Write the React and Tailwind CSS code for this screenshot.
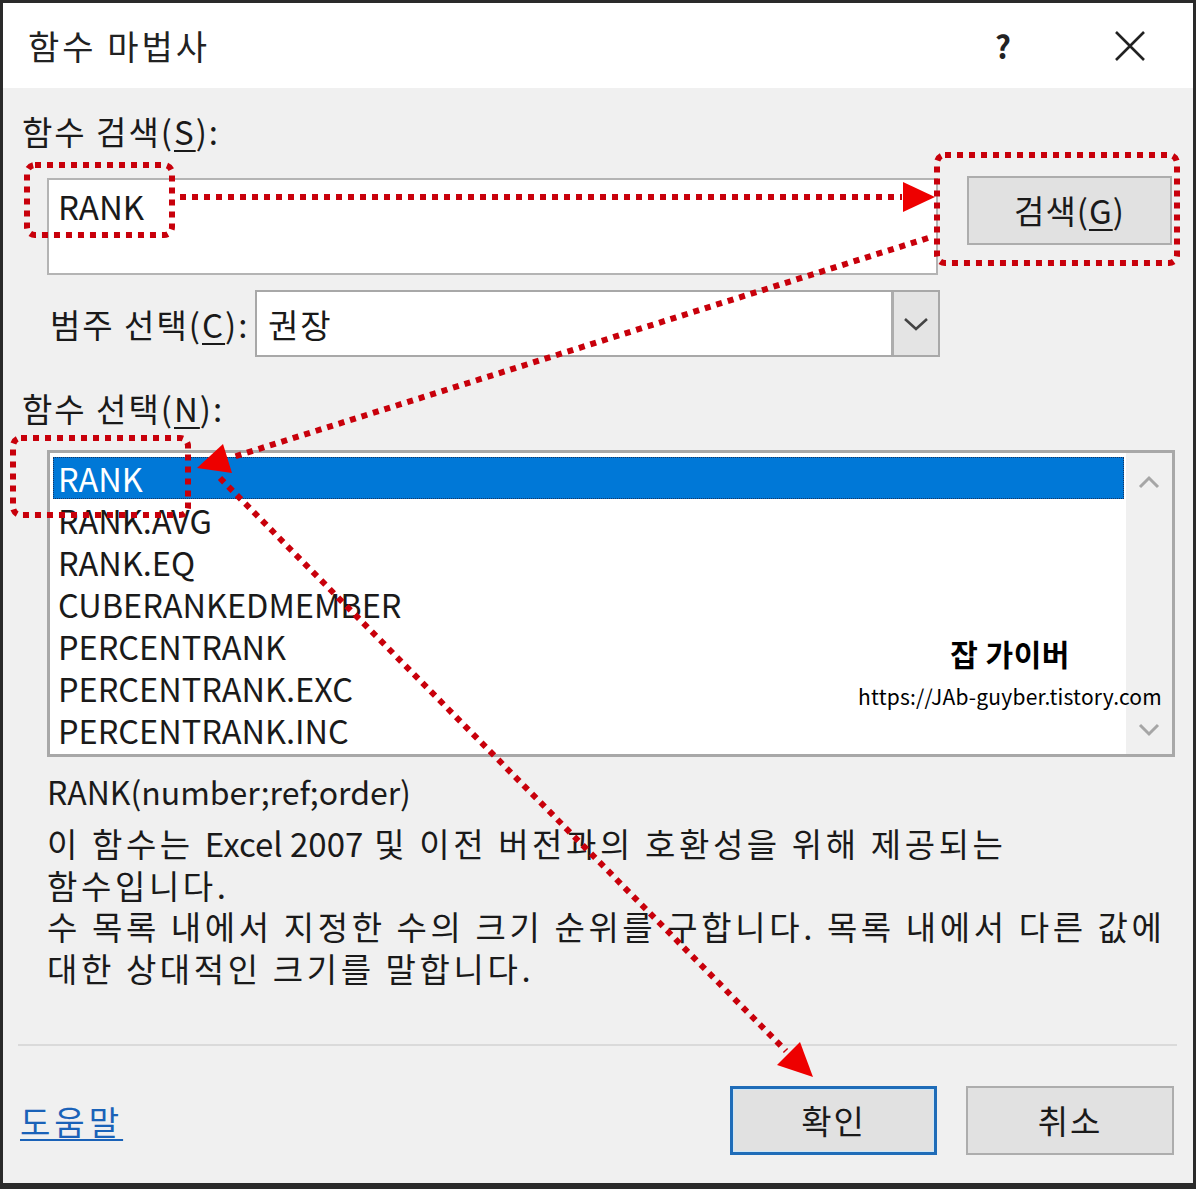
export default function App() {
  const items = [
    "RANK",
    "RANK.AVG",
    "RANK.EQ",
    "CUBERANKEDMEMBER",
    "PERCENTRANK",
    "PERCENTRANK.EXC",
    "PERCENTRANK.INC",
  ];
  return (
    <div className="relative w-[1200px] h-[1189px] bg-white overflow-hidden font-['Noto_Sans_CJK_KR','Noto_Sans',sans-serif] text-[#1a1a1a]">
      <div className="w-[1196px] h-[1189px] border-l-[3px] border-t-[3px] border-r-[3px] border-b-[6px] border-[#2a2a2a] flex flex-col">
        {/* Title bar */}
        <div className="h-[85px] shrink-0 bg-white flex items-center">
          <span className="pl-[25px] text-[34px] leading-none tracking-[3px] text-[#222]">함수 마법사</span>
          <span className="ml-auto text-[31px] font-bold leading-none text-[#222]">?</span>
          <svg width="32" height="30" viewBox="0 0 32 30" className="ml-[103px] mr-[47px]">
            <path d="M2 1 L30 29 M30 1 L2 29" stroke="#222" strokeWidth="2.6" fill="none" />
          </svg>
        </div>

        {/* Body */}
        <div className="flex-1 bg-[#f0f0f0] pl-[19px] flex flex-col">
          <div className="mt-[23px] h-[40px] leading-[40px] text-[33px] tracking-[2px]">
            함수 검색(<span className="underline underline-offset-[5px] decoration-[2px]">S</span>):
          </div>

          <div className="mt-[27px] flex items-start">
            <div className="ml-[25px] w-[891px] h-[97px] bg-white border-2 border-[#b4b4b4] pl-[9px] pt-[6px]">
              <div className="h-[40px] leading-[40px] text-[33px]">RANK</div>
            </div>
            <div className="ml-[29px] -mt-[2px] w-[205px] h-[69px] bg-[#e1e1e1] border-2 border-[#adadad] flex items-center justify-center text-[33px] tracking-[1px]">
              검색(<span className="underline underline-offset-[5px] decoration-[2px]">G</span>)
            </div>
          </div>

          <div className="mt-[15px] flex items-center h-[67px]">
            <div className="ml-[28px] w-[205px] text-[33px] leading-[40px] tracking-[2px] whitespace-nowrap">
              범주 선택(<span className="underline underline-offset-[5px] decoration-[2px]">C</span>):
            </div>
            <div className="w-[685px] h-[67px] bg-white border-2 border-[#a8a8a8] flex">
              <div className="flex-1 pl-[11px] flex items-center text-[33px] leading-[40px] tracking-[2px]">권장</div>
              <div className="w-[47px] h-full bg-[#e4e4e4] border-l-[3px] border-[#adadad] flex items-center justify-center">
                <svg width="26" height="14" viewBox="0 0 26 14">
                  <path d="M2 2 L13 12 L24 2" stroke="#444" strokeWidth="2.6" fill="none" />
                </svg>
              </div>
            </div>
          </div>

          <div className="mt-[31px] h-[40px] leading-[40px] text-[33px] tracking-[2px]">
            함수 선택(<span className="underline underline-offset-[5px] decoration-[2px]">N</span>):
          </div>

          <div className="relative mt-[22px] ml-[25px] w-[1128px] h-[307px] border-[3px] border-[#a8a8a8] bg-white flex">
            <div className="flex-1 pt-[4px] pl-[3px] pr-[2px]">
              {items.map((it, i) => (
                <div
                  key={it}
                  className={
                    i === 0
                      ? "h-[42px] leading-[42px] pl-[5px] text-[32.5px] bg-[#0078d7] text-white outline-1 outline-dotted outline-[#1a3560] -outline-offset-1"
                      : "h-[42px] leading-[42px] pl-[5px] text-[32.5px]"
                  }
                >
                  {it}
                </div>
              ))}
            </div>
            <div className="w-[46px] h-full bg-[#f0f0f0] flex flex-col items-center justify-between pt-[22px] pb-[17px]">
              <svg width="22" height="14" viewBox="0 0 22 14">
                <path d="M2 12 L11 3 L20 12" stroke="#a6a6a6" strokeWidth="3" fill="none" />
              </svg>
              <svg width="22" height="14" viewBox="0 0 22 14">
                <path d="M2 2 L11 11 L20 2" stroke="#a6a6a6" strokeWidth="3" fill="none" />
              </svg>
            </div>
            <div className="absolute left-[800px] top-[182px] w-[320px] flex flex-col items-center">
              <div className="h-[36px] leading-[36px] text-[30px] font-bold tracking-[0.5px] text-black">잡 가이버</div>
              <div className="mt-[11px] h-[28px] leading-[28px] text-[21px] tracking-[0.2px] text-black whitespace-nowrap">https://JAb-guyber.tistory.com</div>
            </div>
          </div>

          <div className="mt-[14px] ml-[25px] h-[40px] leading-[40px] text-[32px]">RANK(number;ref;order)</div>

          <div className="mt-[12px] ml-[25px] leading-[41.5px] text-[33px] tracking-[3.6px] whitespace-nowrap">
            <div>
              이 함수는 <span className="tracking-normal">Excel 2007</span> 및 이전 버전과의 호환성을 위해 제공되는
            </div>
            <div>함수입니다.</div>
            <div>수 목록 내에서 지정한 수의 크기 순위를 구합니다. 목록 내에서 다른 값에</div>
            <div>대한 상대적인 크기를 말합니다.</div>
          </div>

          <div className="mt-[55px] -ml-[4px] w-[1159px] h-[2px] bg-[#dadada]" />

          <div className="mt-[40px] h-[69px] flex items-center">
            <span className="-ml-[2px] text-[33px] leading-[40px] tracking-[4px] text-[#1a62b8] underline underline-offset-[4px] decoration-[2px]">도움말</span>
            <div className="ml-auto w-[207px] h-[69px] bg-[#e1e1e1] border-[3px] border-[#1f6cb8] shadow-[inset_0_0_0_1px_#cde6f7] flex items-center justify-center text-[33px] tracking-[2px]">
              확인
            </div>
            <div className="ml-[29px] mr-[19px] w-[208px] h-[69px] bg-[#e1e1e1] border-2 border-[#adadad] flex items-center justify-center text-[33px] tracking-[2px]">
              취소
            </div>
          </div>
        </div>
      </div>

      {/* Annotation overlay */}
      <svg
        className="absolute left-0 top-0 pointer-events-none"
        width="1200"
        height="1189"
        viewBox="0 0 1200 1189"
      >
        <g stroke="#c8000b" strokeWidth="6" strokeDasharray="6 6" fill="none">
          <rect x="27" y="165" width="145" height="70" rx="8" />
          <line x1="180" y1="197" x2="902" y2="197" />
          <rect x="937" y="155" width="240" height="108" rx="8" />
          <line x1="928" y1="238" x2="230" y2="458" />
          <rect x="13" y="438" width="175" height="77" rx="8" />
          <line x1="220" y1="478" x2="786" y2="1051" />
        </g>
        <g fill="#ee0000">
          <polygon points="903,182 903,212 935,197" />
          <polygon points="197,468 223,444 232,473" />
          <polygon points="813,1077 777,1065 800,1042" />
        </g>
      </svg>
    </div>
  );
}
